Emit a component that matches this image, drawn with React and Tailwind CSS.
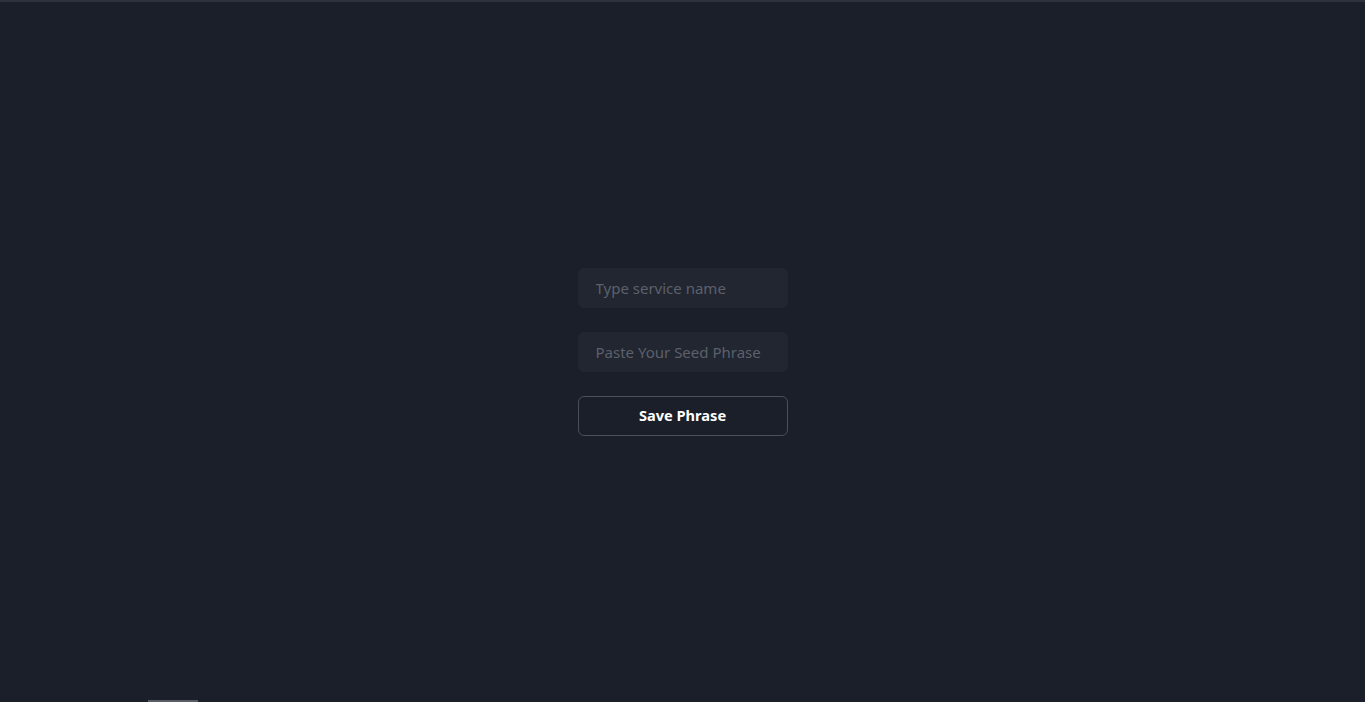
import React from "react";

export default function App() {
  return (
    <div
      className="relative h-[702px] w-full overflow-hidden bg-[#1b1f2a] border-t-2 border-[#2f323e] flex items-center justify-center"
      style={{ fontFamily: '"Noto Sans", "Open Sans", sans-serif' }}
    >
      <div className="flex flex-col gap-6 w-[210px]">
        <input
          type="text"
          placeholder="Type service name"
          className="h-10 w-full rounded-md bg-[#222631] px-[18px] text-[15px] text-white placeholder:text-[#5c606b] outline-none"
        />
        <input
          type="text"
          placeholder="Paste Your Seed Phrase"
          className="h-10 w-full rounded-md bg-[#222631] px-[18px] text-[15px] text-white placeholder:text-[#5c606b] outline-none"
        />
        <button className="h-10 w-full rounded-md border border-[#4b4f5b] bg-transparent text-[14.6px] font-bold text-white">
          Save Phrase
        </button>
      </div>
      <div className="absolute bottom-0 left-[148px] h-[2px] w-[50px] bg-[#5a5d66]" />
    </div>
  );
}
